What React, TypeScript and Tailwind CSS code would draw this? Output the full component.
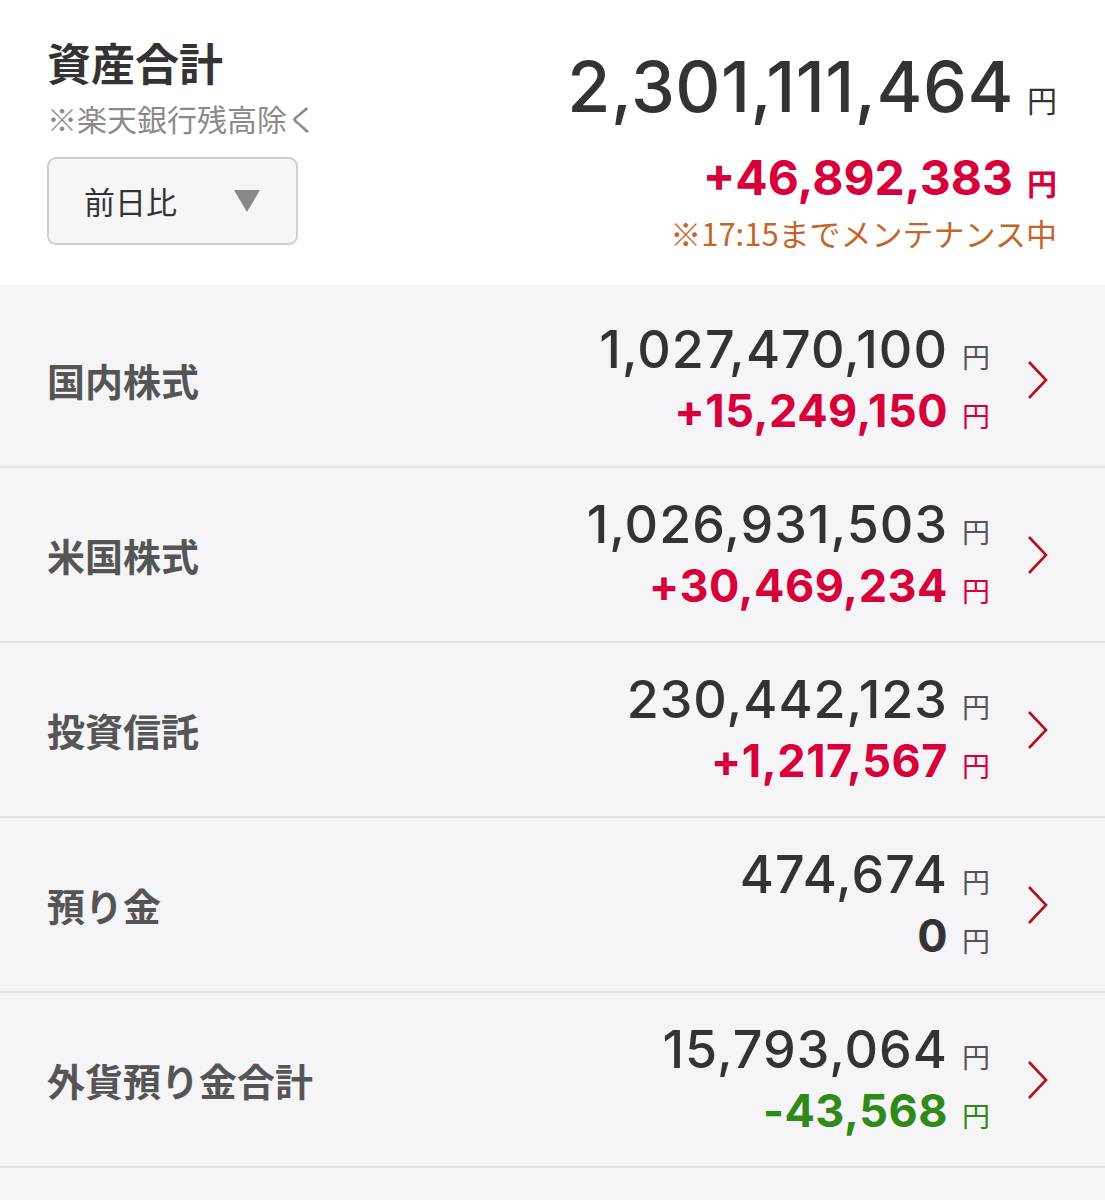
const JP = "font-['Noto_Sans_CJK_JP',sans-serif]";
const NUM = "font-['Inter','Noto_Sans_CJK_JP',sans-serif]";

type Row = { label: string; value: string; diff: string; tone: "up" | "down" | "flat" };

const ROWS: Row[] = [
  { label: "国内株式", value: "1,027,470,100", diff: "+15,249,150", tone: "up" },
  { label: "米国株式", value: "1,026,931,503", diff: "+30,469,234", tone: "up" },
  { label: "投資信託", value: "230,442,123", diff: "+1,217,567", tone: "up" },
  { label: "預り金", value: "474,674", diff: "0", tone: "flat" },
  { label: "外貨預り金合計", value: "15,793,064", diff: "-43,568", tone: "down" },
];

const TONE = { up: "text-[#d7003a]", down: "text-[#2f8a17]", flat: "text-[#333333]" };

function Chevron() {
  return (
    <svg width="24" height="40" viewBox="0 0 24 40" className="ml-[36px]">
      <path d="M3 2L20 20L3 38" fill="none" stroke="#b3121b" strokeWidth="2.6" />
    </svg>
  );
}

function AssetRow({ row, first }: { row: Row; first?: boolean }) {
  return (
    <div className={`flex items-center border-b-2 border-[#e3e3e6] pl-[47px] pr-[55px] ${first ? "h-[183px] pt-[8px]" : "h-[175px]"}`}>
      <div className={`${JP} flex-1 text-[38px] font-bold text-[#555555]`}>{row.label}</div>
      <div className="flex flex-col items-end">
        <div className="flex items-baseline">
          <span className={`${NUM} text-[52px] leading-[62px] font-medium tracking-[1px] text-[#333333]`}>{row.value}</span>
          <span className={`${JP} ml-[14px] text-[28px] text-[#555555]`}>円</span>
        </div>
        <div className="flex items-baseline">
          <span className={`${NUM} text-[45px] leading-[60px] font-bold tracking-[0.5px] ${TONE[row.tone]}`}>{row.diff}</span>
          <span className={`${JP} ml-[14px] text-[28px] ${row.tone === "flat" ? "text-[#555555]" : TONE[row.tone]}`}>円</span>
        </div>
      </div>
      <Chevron />
    </div>
  );
}

export default function App() {
  return (
    <div className="w-[1105px] h-[1200px] overflow-hidden bg-[#f5f5f7]">
      <div className="flex h-[285px] bg-white pl-[47px] pr-[48px]">
        <div className="flex flex-col">
          <h1 className={`${JP} mt-[34px] text-[44px] leading-[56px] font-bold text-[#333333]`}>資産合計</h1>
          <p className={`${JP} mt-[8px] text-[30px] leading-[40px] text-[#8a8a8a]`}>※楽天銀行残高除く</p>
          <button className="mt-[19px] flex h-[88px] w-[251px] items-center justify-between rounded-[9px] border-2 border-[#cfcfcf] bg-[#f6f6f6] pl-[35px] pr-[36px]">
            <span className={`${JP} text-[31px] text-[#333333]`}>前日比</span>
            <svg width="26" height="22" viewBox="0 0 26 22"><path d="M0 0H26L13 22Z" fill="#888888" /></svg>
          </button>
        </div>
        <div className="flex flex-1 flex-col items-end">
          <div className="mt-[45px] flex items-baseline">
            <span className={`${NUM} text-[70px] leading-[84px] font-medium tracking-[0.5px] text-[#333333]`}>2,301,111,464</span>
            <span className={`${JP} ml-[13px] text-[30px] text-[#333333]`}>円</span>
          </div>
          <div className="mt-[18px] flex items-baseline">
            <span className={`${NUM} text-[48px] leading-[62px] font-bold text-[#d7003a]`}>+46,892,383</span>
            <span className={`${JP} ml-[14px] text-[30px] font-bold text-[#d7003a]`}>円</span>
          </div>
          <p className={`${JP} mt-[4px] text-[31px] leading-[40px] text-[#c4662c]`}>※17:15までメンテナンス中</p>
        </div>
      </div>
      {ROWS.map((r, i) => (
        <AssetRow key={r.label} row={r} first={i === 0} />
      ))}
    </div>
  );
}
